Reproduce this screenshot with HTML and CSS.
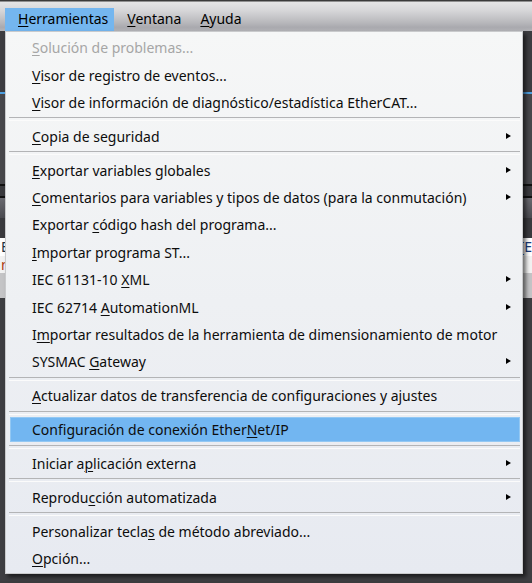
FILE: index.html
```html
<!DOCTYPE html>
<html lang="es">
<head>
<meta charset="utf-8">
<title>Herramientas</title>
<link rel="stylesheet" href="styles.css">
</head>
<body>
<div class="app">
  <div class="menubar">
    <span class="mb-item active"><u>H</u>erramientas</span>
    <span class="mb-item"><u>V</u>entana</span>
    <span class="mb-item"><u>A</u>yuda</span>
  </div>
  <div class="backdrop">
    <div class="band b1"></div>
    <div class="band blue"></div>
    <div class="band b2"></div>
    <div class="band black"></div>
    <div class="band b3"></div>
    <div class="band black"></div>
    <div class="band b4"></div>
    <div class="band b5"></div>
    <div class="band white"><span class="edge-l">E</span><span class="edge-r">[E</span></div>
    <div class="band white2"><span class="edge-l red">ne</span></div>
    <div class="band light"></div>
    <div class="band dark"></div>
  </div>

  <div class="menu">
    <div class="item disabled"><span><u>S</u>olución de problemas...</span></div>
    <div class="item"><span><u>V</u>isor de registro de eventos...</span></div>
    <div class="item"><span><u>V</u>isor de información de diagnóstico/estadística EtherCAT...</span></div>
    <div class="sep"></div>
    <div class="item sub"><span><u>C</u>opia de seguridad</span></div>
    <div class="sep"></div>
    <div class="item sub"><span><u>E</u>xportar variables globales</span></div>
    <div class="item sub"><span><u>C</u>omentarios para variables y tipos de datos (para la conmutación)</span></div>
    <div class="item"><span>Exportar <u>c</u>ódigo hash del programa...</span></div>
    <div class="item"><span><u>I</u>mportar programa ST...</span></div>
    <div class="item sub"><span>IEC 61131-10 <u>X</u>ML</span></div>
    <div class="item sub"><span>IEC 62714 <u>A</u>utomationML</span></div>
    <div class="item"><span>I<u>m</u>portar resultados de la herramienta de dimensionamiento de motor</span></div>
    <div class="item sub"><span>SYSMAC <u>G</u>ateway</span></div>
    <div class="sep"></div>
    <div class="item"><span><u>A</u>ctualizar datos de transferencia de configuraciones y ajustes</span></div>
    <div class="sep"></div>
    <div class="item hl"><span>Configuración de conexión Ether<u>N</u>et/IP</span></div>
    <div class="sep"></div>
    <div class="item sub"><span>Iniciar a<u>p</u>licación externa</span></div>
    <div class="sep"></div>
    <div class="item sub"><span>Reprodu<u>c</u>ción automatizada</span></div>
    <div class="sep"></div>
    <div class="item"><span>Personalizar tecla<u>s</u> de método abreviado...</span></div>
    <div class="item"><span><u>O</u>pción...</span></div>
  </div>
</div>
</body>
</html>
```
FILE: styles.css
```css
* { box-sizing: border-box; }
html, body { margin: 0; padding: 0; }
body {
  width: 532px;
  height: 583px;
  overflow: hidden;
  background: #3c3c3f;
  font-family: "Noto Sans", "Open Sans", sans-serif;
  font-size: 14px;
  color: #111;
}
u { text-decoration-thickness: 1px; text-underline-offset: 2px; }
.app { position: relative; width: 532px; height: 583px; }

.menubar {
  height: 31px;
  display: flex;
  align-items: flex-end;
  padding-left: 5px;
  background: linear-gradient(#3a3a3a 0, #3a3a3a 1px, #e4e4e5 2px, #d6d6d8 35%, #b6b6ba 75%, #a9a9ae 88%, #b4b4b8 100%);
}
.mb-item {
  height: 23px;
  line-height: 22px;
  padding: 0 6px 0 13px;
  color: #000;
}
.mb-item.active { background: #74b6ef; }

.backdrop { display: flex; flex-direction: column; }
.band { width: 100%; position: relative; }
.b1 { height: 61px; background: #3d3d41; }
.blue { height: 2px; background: #4d9fe0; }
.b2 { height: 90px; background: #47474b; }
.black { height: 2px; background: #111; }
.b3 { height: 10px; background: #3a3a3e; }
.b4 { height: 20px; background: linear-gradient(#6a6a70, #4a4a50); }
.b5 { height: 20px; background: #3a3a3e; }
.white { height: 18px; background: #fff; display: flex; justify-content: space-between; font-size: 14px; line-height: 18px; color: #234; }
.white2 { height: 17px; background: #f2f2f2; display: flex; font-size: 14px; line-height: 17px; }
.edge-l { padding-left: 1px; }
.edge-r { padding-right: 0; color: #1a3a7a; }
.red { color: #b03a10; }
.light { height: 25px; background: #c4c4c6; }
.dark { height: 283px; background: #3e3e42; }

.menu {
  position: absolute;
  left: 5px;
  top: 31px;
  width: 518px;
  height: 543px;
  border: 1px solid #c9cacc;
  background: linear-gradient(#f6f7f7, #eef0f3 50%, #e7eaf1);
  padding: 2px 0 0;
  box-shadow: 3px 3px 4px rgba(0, 0, 0, 0.55);
  display: flex;
  flex-direction: column;
}
.item {
  height: 25px;
  margin: 1.2px 2px 1.2px 4px;
  padding-left: 22px;
  display: flex;
  align-items: center;
  white-space: nowrap;
  color: #0d0d0d;
  position: relative;
}
.item.disabled { color: #a6a6a6; }
.item.hl {
  background: #72b6f1;
  border: 1px solid #93c8f3;
  padding-left: 21px;
}
.item.sub::after {
  content: "";
  position: absolute;
  right: 9px;
  top: 9px;
  border-left: 5px solid #000;
  border-top: 3.5px solid transparent;
  border-bottom: 3.5px solid transparent;
}
.sep {
  height: 6.5px;
  margin: 0 2px 0 3px;
  display: flex;
  align-items: center;
}
.sep::before {
  content: "";
  display: block;
  width: 100%;
  height: 2px;
  border-top: 1px solid #b3b4b6;
  border-bottom: 1px solid #fbfbfb;
}
```
